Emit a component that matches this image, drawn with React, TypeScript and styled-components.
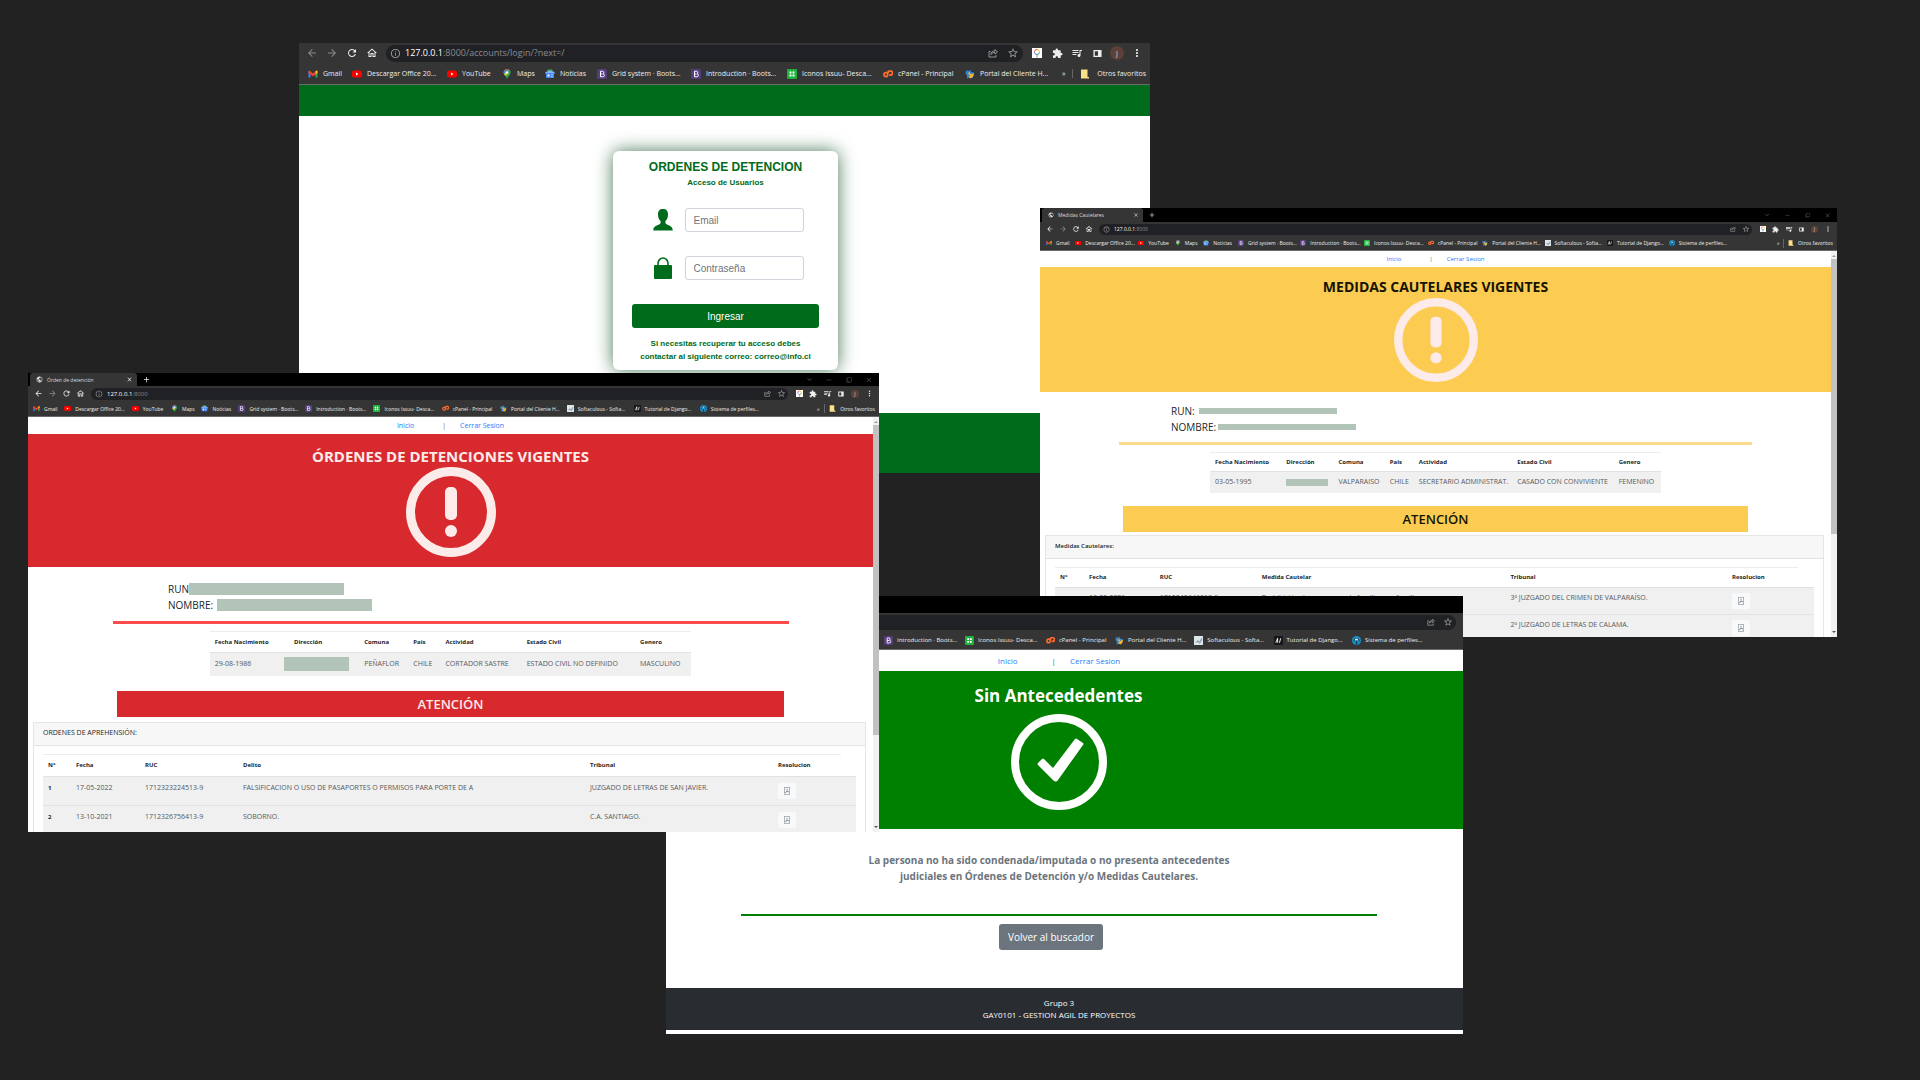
import React from "react";
import styled, { createGlobalStyle, css } from "styled-components";
import {
  MdArrowBack,
  MdArrowForward,
  MdRefresh,
  MdOutlineHome,
  MdInfoOutline,
  MdStarBorder,
  MdExtension,
  MdQueueMusic,
  MdMoreVert,
  MdClose,
  MdAdd,
  MdExpandMore,
  MdRemove,
  MdFilterNone,
  MdPublic,
} from "react-icons/md";
import { BsFilePdf } from "react-icons/bs";

const GlobalStyle = createGlobalStyle`
  *, *::before, *::after { box-sizing: border-box; }
  body { margin: 0; background: #222; font-family: "Open Sans", "Noto Sans", sans-serif; }
  button { font: inherit; border: 0; padding: 0; background: none; color: inherit; }
  a { text-decoration: none; }
  h1, h2, h3, p { margin: 0; }
`;

/* ---------- sizes of the browser frame at each zoom ---------- */

type Zoom = {
  cell: number;
  icon: number;
  url: number;
  label: number;
  tab: number;
  tabWidth: number;
  bar: number;
  marks: number;
  fav: number;
  favGap: number;
  others: number;
};

const zoomLarge: Zoom = { cell: 20, icon: 12, url: 9, label: 7, tab: 0, tabWidth: 0, bar: 20, marks: 21, fav: 10, favGap: 5, others: 84 };
const zoomMedium: Zoom = { cell: 17, icon: 10, url: 7, label: 6, tab: 17, tabWidth: 0, bar: 18, marks: 18, fav: 9, favGap: 4, others: 0 };
const zoomSmall: Zoom = { cell: 14, icon: 9, url: 6, label: 5, tab: 13, tabWidth: 107, bar: 15, marks: 15, fav: 7, favGap: 4, others: 58 };
const zoomTiny: Zoom = { cell: 13, icon: 8, url: 5, label: 5, tab: 14, tabWidth: 101, bar: 14, marks: 14, fav: 6, favGap: 4, others: 56 };

/* ---------- desktop and windows ---------- */

const Desktop = styled.main`
  position: relative;
  min-height: 100vh;
  overflow: hidden;
  background: #222;
`;

const Window = styled.section<{ $x: number; $y: number; $w: number; $h: number }>`
  position: absolute;
  left: ${(p) => p.$x}px;
  top: ${(p) => p.$y}px;
  width: ${(p) => p.$w}px;
  height: ${(p) => p.$h}px;
  display: flex;
  flex-direction: column;
  overflow: hidden;
  background: #fff;
`;

const TabStrip = styled.div<{ $z: Zoom }>`
  flex: none;
  display: flex;
  align-items: stretch;
  height: ${(p) => p.$z.tab}px;
  padding-left: 2px;
  background: #000;
  color: #bbb;
  font-size: ${(p) => p.$z.label}px;
`;

const Tab = styled.div<{ $w: number }>`
  display: flex;
  align-items: center;
  gap: 4px;
  width: ${(p) => p.$w}px;
  padding: 0 4px 0 6px;
  border-radius: 3px 3px 0 0;
  background: #353535;
  color: #ddd;
  line-height: 10px;
  white-space: nowrap;
  button { margin-left: auto; }
`;

const IconButton = styled.button<{ $dim?: boolean; $w?: number }>`
  flex: none;
  display: flex;
  align-items: center;
  justify-content: center;
  width: ${(p) => (p.$w ? `${p.$w}px` : "auto")};
  color: ${(p) => (p.$dim ? "#8a8a8a" : "#eee")};
`;

const WindowControls = styled.div`
  display: flex;
  margin-left: auto;
  ${IconButton} { color: #4a4a4a; }
`;

const Toolbar = styled.div<{ $z: Zoom }>`
  flex: none;
  display: flex;
  align-items: center;
  height: ${(p) => p.$z.bar}px;
  padding: 0 3px;
  background: #353535;
`;

const AddressBar = styled.div<{ $z: Zoom }>`
  flex: 1;
  display: flex;
  align-items: center;
  height: ${(p) => p.$z.bar - 3}px;
  margin: 0 4px;
  padding-left: 4px;
  border-radius: 10px;
  background: #202124;
  color: #8b8d90;
  font-size: ${(p) => p.$z.url}px;
  svg { color: #9a9a9a; }
`;

const Address = styled.span`
  flex: 1;
  padding-left: 4px;
  line-height: 12px;
  white-space: nowrap;
  b { color: #fff; font-weight: 400; }
`;

const Avatar = styled.span<{ $z: Zoom }>`
  display: flex;
  align-items: center;
  justify-content: center;
  width: ${(p) => p.$z.cell - 6}px;
  height: ${(p) => p.$z.cell - 6}px;
  border-radius: 50%;
  background: #5d4037;
  color: #ddd;
  font-size: ${(p) => p.$z.label}px;
`;

const BookmarkBar = styled.nav<{ $z: Zoom; $indent: number }>`
  flex: none;
  display: flex;
  align-items: center;
  height: ${(p) => p.$z.marks + 1}px;
  padding: 0 4px 0 ${(p) => p.$indent}px;
  border-bottom: 1px solid #6a6a6a;
  background: #353535;
  color: #eee;
  font-size: ${(p) => p.$z.label}px;
`;

const BookmarkGrid = styled.div<{ $cols: string }>`
  flex: 1;
  display: grid;
  grid-template-columns: ${(p) => p.$cols};
  align-items: center;
`;

const BookmarkLink = styled.a<{ $z: Zoom }>`
  display: flex;
  align-items: center;
  gap: ${(p) => p.$z.favGap}px;
  min-width: 0;
  color: #eee;
  white-space: nowrap;
  svg { flex: none; }
`;

const OtherBookmarks = styled.div<{ $z: Zoom }>`
  flex: none;
  display: flex;
  align-items: center;
  justify-content: space-between;
  width: ${(p) => p.$z.others}px;
  white-space: nowrap;
`;

const Divider = styled.span`
  width: 1px;
  height: 9px;
  background: #666;
`;

/* ---------- drawings ---------- */

function FavIcon({ kind, size }: { kind: string; size: number }) {
  return (
    <svg width={size} height={size} viewBox="0 0 20 20" aria-hidden="true">
      {kind === "cpanel" && (
        <g fill="none" stroke="#ff6c2c" strokeWidth="3.500">
          <path d="M9 7H6a4 4 0 0 0 0 8h2l3-11h4a4 4 0 0 1 0 8h-3" strokeLinejoin="round" />
        </g>
      )}
      {kind === "gmail" && (
        <>
          <path d="M1 4v13h4V9z" fill="#4285f4" />
          <path d="M19 4v13h-4V9z" fill="#34a853" />
          <path d="M1 4l2-1 7 6 7-6 2 1v4l-9 7-9-7z" fill="#ea4335" />
          <path d="M15 5l2-2 2 1v4l-4 3z" fill="#fbbc04" />
        </>
      )}
      {kind === "youtube" && (
        <>
          <rect x="0" y="3" width="20" height="14" rx="4" fill="#f00" />
          <path d="M8 7l5 3-5 3z" fill="#fff" />
        </>
      )}
      {kind === "maps" && (
        <>
          <path d="M10 0a7 7 0 0 0-7 7c0 5 5 7 7 13 2-6 7-8 7-13a7 7 0 0 0-7-7z" fill="#34a853" />
          <path d="M10 0a7 7 0 0 0-6 4l4 4 6-7z" fill="#ea4335" />
          <path d="M14 1L5 12 3 8l1-4z" fill="#4285f4" />
          <path d="M4 10l4-4 4 3-5 5z" fill="#fbbc04" />
          <circle cx="10" cy="7" r="2.500" fill="#fff" />
        </>
      )}
      {kind === "news" && (
        <>
          <path d="M5 1h10v6H5z" fill="#34a853" />
          <path d="M1 6l9-3 9 3v4H1z" fill="#8ab4f8" />
          <rect x="2" y="8" width="16" height="10" rx="1" fill="#4285f4" />
          <path d="M5 11h4v4H5zM12 11h4v1h-4zM12 14h4v1h-4z" fill="#fff" />
        </>
      )}
      {kind === "bootstrap" && (
        <>
          <rect width="20" height="20" rx="3" fill="#563d7c" />
          <path d="M7 4.500h4.200a2.600 2.600 0 0 1 .8 5 3 3 0 0 1-.6 6H7z" fill="none" stroke="#fff" strokeWidth="2" />
          <path d="M7 10h4" stroke="#fff" strokeWidth="2" />
        </>
      )}
      {kind === "icons" && (
        <>
          <rect width="20" height="20" rx="2" fill="#1db33c" />
          <path d="M5 5h4v4H5zM11 5h4v4h-4zM5 11h4v4H5zM11 11h4v4h-4z" fill="#fff" />
        </>
      )}
      {kind === "portal" && (
        <>
          <path d="M2 3l6 1 3-3 1 5 6 1-3 5 1 6-7-1-5 2V13L1 9z" fill="#2f86d6" />
          <path d="M8 6l4 5 6-3-1 6-5 5-5-3 3-3-4-4z" fill="#f7b52c" />
        </>
      )}
      {kind === "soft" && (
        <>
          <rect width="20" height="20" fill="#dfe6ea" />
          <path d="M3 15l5-6 4 3 6-9v6l-5 8-4-3z" fill="#8fa3b0" />
        </>
      )}
      {kind === "django" && (
        <>
          <rect width="20" height="20" rx="2" fill="#15171a" />
          <path d="M4 15L8 5v10M12 15l3-10" stroke="#fff" strokeWidth="2" fill="none" />
        </>
      )}
      {kind === "profiles" && (
        <>
          <circle cx="10" cy="10" r="10" fill="#1b8fc4" />
          <path d="M9 8h2l1 11H8z" fill="#103a55" />
          <circle cx="10" cy="7" r="3" fill="#e6f3fa" />
          <path d="M4 12c0-9 12-9 12 0" stroke="#103a55" strokeWidth="2" fill="none" />
        </>
      )}
      {kind === "folder" && <path d="M2 1h13v15h3v3H2z" fill="#fbe08a" />}
      {kind === "lens" && (
        <>
          <rect width="20" height="20" fill="#fff" />
          <path d="M5 9a5 5 0 0 1 5-6" stroke="#ea4335" strokeWidth="2" fill="none" />
          <path d="M10 3a5 5 0 0 1 5 6" stroke="#fbbc04" strokeWidth="2" fill="none" />
          <path d="M15 9a5 5 0 0 1-5 4" stroke="#34a853" strokeWidth="2" fill="none" />
          <path d="M10 13a5 5 0 0 1-5-4" stroke="#4285f4" strokeWidth="2" fill="none" />
          <path d="M10 13v6" stroke="#888" strokeWidth="2" />
        </>
      )}
      {kind === "panel" && <path d="M1 2h18v16H1zM4 5v10h7V5z" fill="#eee" fillRule="evenodd" />}
      {kind === "share" && (
        <path d="M5 7H2v11h14v-4M6 13c0-5 3-7 8-7V3l5 5-5 4V9c-4 0-6 1-8 4z" fill="none" stroke="#b0b0b0" strokeWidth="1.600" />
      )}
    </svg>
  );
}

const WarningSign = ({ size }: { size: number }) => (
  <svg width={size} height={size} viewBox="0 0 90 90" aria-hidden="true">
    <circle cx="45" cy="45" r="40.500" fill="none" stroke="#fcebe9" strokeWidth="9" />
    <rect x="39" y="20" width="12" height="33" rx="5" fill="#fcebe9" />
    <circle cx="45" cy="64" r="6" fill="#fcebe9" />
  </svg>
);

const CheckSign = () => (
  <svg width="96" height="96" viewBox="0 0 96 96" aria-hidden="true">
    <circle cx="48" cy="48" r="44" fill="none" stroke="#fff" strokeWidth="8" />
    <path
      d="M27 49l4-4q1-1 2 0l9 9 22-29q1-1 2 0l6 4q1 1 0 2L47 66q-2 3-5 0L27 51q-1-1 0-2z"
      fill="#fff"
    />
  </svg>
);

const PersonGlyph = () => (
  <svg width="20" height="22" viewBox="0 0 20 22" role="img" aria-label="Email">
    <path
      d="M10 0C6.500 0 5 2 5 5.500c0 2.500.8 5 2.500 6.500.4 1.500 0 2.800-1 3.300C3.500 16.800.5 17.500.3 21v.5h19.400V21c-.2-3.500-3.200-4.200-6.200-5.700-1-.5-1.400-1.800-1-3.300C14.200 10.500 15 8 15 5.500 15 2 13.500 0 10 0z"
      fill="#006b1b"
    />
  </svg>
);

const LockGlyph = () => (
  <svg width="20" height="22" viewBox="0 0 20 22" role="img" aria-label="Contraseña">
    <path d="M5 9V6.500a5 5.500 0 0 1 10 0V9" fill="none" stroke="#006b1b" strokeWidth="1.600" />
    <rect x="1" y="8" width="18" height="14" rx="1" fill="#006b1b" />
  </svg>
);

/* ---------- browser frame ---------- */

const bookmarks = [
  { kind: "gmail", text: "Gmail", w: 44 },
  { kind: "youtube", text: "Descargar Office 20...", w: 95 },
  { kind: "youtube", text: "YouTube", w: 55 },
  { kind: "maps", text: "Maps", w: 43 },
  { kind: "news", text: "Noticias", w: 52 },
  { kind: "bootstrap", text: "Grid system · Boots...", w: 94 },
  { kind: "bootstrap", text: "Introduction · Boots...", w: 96 },
  { kind: "icons", text: "Iconos Issuu- Desca...", w: 96 },
  { kind: "cpanel", text: "cPanel - Principal", w: 82 },
  { kind: "portal", text: "Portal del Cliente H...", w: 94 },
  { kind: "soft", text: "Softaculous - Softa...", w: 94 },
  { kind: "django", text: "Tutorial de Django...", w: 93 },
  { kind: "profiles", text: "Sistema de perfiles...", w: 93 },
];

type FrameProps = {
  z: Zoom;
  title?: string;
  path?: string;
  from?: number;
  to: number;
  lastWidth: number;
  indent: number;
  cropped?: boolean;
};

function BrowserFrame({ z, title, path, from = 0, to, lastWidth, indent, cropped }: FrameProps) {
  const shown = bookmarks.slice(from, to);
  const cols = shown
    .map((b, i) => `minmax(0, ${i === shown.length - 1 ? lastWidth : b.w}fr)`)
    .join(" ");
  return (
    <>
      {z.tab > 0 && (
        <TabStrip $z={z}>
          {title && (
            <>
              <Tab $w={z.tabWidth}>
                <MdPublic size={z.icon - 2} />
                {title}
                <IconButton aria-label="Cerrar pestaña"><MdClose size={z.icon - 2} /></IconButton>
              </Tab>
              <IconButton aria-label="Nueva pestaña" $w={18}><MdAdd size={z.icon} /></IconButton>
              <WindowControls>
                <IconButton aria-label="Buscar pestañas" $w={20}><MdExpandMore size={z.icon} /></IconButton>
                <IconButton aria-label="Minimizar" $w={20}><MdRemove size={z.icon - 1} /></IconButton>
                <IconButton aria-label="Restaurar" $w={20}><MdFilterNone size={z.icon - 3} /></IconButton>
                <IconButton aria-label="Cerrar" $w={20}><MdClose size={z.icon - 1} /></IconButton>
              </WindowControls>
            </>
          )}
        </TabStrip>
      )}
      <Toolbar $z={z}>
        {!cropped && (
          <>
            <IconButton aria-label="Atrás" $w={z.cell} $dim={!title}><MdArrowBack size={z.icon} /></IconButton>
            <IconButton aria-label="Adelante" $w={z.cell} $dim><MdArrowForward size={z.icon} /></IconButton>
            <IconButton aria-label="Recargar" $w={z.cell}><MdRefresh size={z.icon} /></IconButton>
            <IconButton aria-label="Inicio" $w={z.cell}><MdOutlineHome size={z.icon} /></IconButton>
          </>
        )}
        <AddressBar $z={z}>
          {!cropped && <MdInfoOutline size={z.icon - 1} />}
          <Address>
            {!cropped && (
              <>
                <b>127.0.0.1</b>
                {path}
              </>
            )}
          </Address>
          <IconButton aria-label="Compartir" $w={z.cell}><FavIcon kind="share" size={z.icon - 2} /></IconButton>
          <IconButton aria-label="Favorito" $w={z.cell}><MdStarBorder size={z.icon} /></IconButton>
        </AddressBar>
        {!cropped && (
          <>
            <IconButton aria-label="Lens" $w={z.cell}><FavIcon kind="lens" size={z.icon - 2} /></IconButton>
            <IconButton aria-label="Extensiones" $w={z.cell}><MdExtension size={z.icon - 1} /></IconButton>
            <IconButton aria-label="Multimedia" $w={z.cell}><MdQueueMusic size={z.icon} /></IconButton>
            <IconButton aria-label="Panel lateral" $w={z.cell}><FavIcon kind="panel" size={z.icon - 3} /></IconButton>
            <IconButton aria-label="Perfil" $w={z.cell}><Avatar $z={z}>J</Avatar></IconButton>
            <IconButton aria-label="Menú" $w={z.cell}><MdMoreVert size={z.icon} /></IconButton>
          </>
        )}
      </Toolbar>
      <BookmarkBar $z={z} $indent={indent}>
        <BookmarkGrid $cols={cols}>
          {shown.map((b) => (
            <BookmarkLink key={b.text} href="#" $z={z}>
              <FavIcon kind={b.kind} size={z.fav} />
              {b.text}
            </BookmarkLink>
          ))}
        </BookmarkGrid>
        {!cropped && (
          <OtherBookmarks $z={z}>
            <span>»</span>
            <Divider />
            <FavIcon kind="folder" size={z.fav} />
            <span>Otros favoritos</span>
          </OtherBookmarks>
        )}
      </BookmarkBar>
    </>
  );
}

/* ---------- login page ---------- */

const GreenBand = styled.div<{ $h: number }>`
  flex: none;
  height: ${(p) => p.$h}px;
  background: #006b1b;
`;

const LoginArea = styled.div`
  flex: 1;
  display: flex;
  justify-content: center;
  align-items: flex-start;
  padding: 35px 0 0 2px;
`;

const LoginCard = styled.form`
  display: flex;
  flex-direction: column;
  align-items: center;
  width: 225px;
  height: 219px;
  padding: 8px 19px 0;
  border-radius: 6px;
  background: #fff;
  box-shadow: 0 0 18px #4a7a58;
  color: #006b1b;
  font-family: "Liberation Sans", Arial, sans-serif;
  font-weight: 700;
`;

const LoginTitle = styled.h1`
  font-size: 12px;
  line-height: 16px;
`;

const LoginSubtitle = styled.p`
  margin-bottom: 17px;
  font-size: 8px;
  line-height: 16px;
`;

const Field = styled.div`
  display: flex;
  align-items: center;
  gap: 12px;
  margin-bottom: 24px;
  padding-left: 5px;
  label { display: flex; }
`;

const TextInput = styled.input`
  width: 119px;
  height: 24px;
  padding: 0 8px;
  border: 1px solid #ced4da;
  border-radius: 3px;
  font-family: inherit;
  font-size: 10px;
  &::placeholder { color: #6c757d; opacity: 1; }
`;

const SubmitButton = styled.button`
  align-self: stretch;
  height: 24px;
  margin-bottom: 9px;
  border-radius: 3px;
  background: #006b1b;
  color: #fff;
  font-size: 10px;
  font-weight: 400;
`;

const LoginHelp = styled.p`
  font-size: 8px;
  line-height: 13px;
  text-align: center;
  white-space: nowrap;
`;

function LoginWindow() {
  return (
    <Window $x={299} $y={43} $w={851} $h={430}>
      <BrowserFrame z={zoomLarge} path=":8000/accounts/login/?next=/" to={10} lastWidth={97} indent={9} />
      <GreenBand $h={31} />
      <LoginArea>
        <LoginCard onSubmit={(e) => e.preventDefault()}>
          <LoginTitle>ORDENES DE DETENCION</LoginTitle>
          <LoginSubtitle>Acceso de Usuarios</LoginSubtitle>
          <Field>
            <label htmlFor="email"><PersonGlyph /></label>
            <TextInput id="email" type="email" placeholder="Email" />
          </Field>
          <Field>
            <label htmlFor="password"><LockGlyph /></label>
            <TextInput id="password" type="password" placeholder="Contraseña" />
          </Field>
          <SubmitButton type="submit">Ingresar</SubmitButton>
          <LoginHelp>
            Si necesitas recuperar tu acceso debes
            <br />
            contactar al siguiente correo: correo@info.cl
          </LoginHelp>
        </LoginCard>
      </LoginArea>
      <GreenBand $h={60} />
    </Window>
  );
}

/* ---------- result pages ---------- */

type Tone = "red" | "yellow" | "green";
const toneFill: Record<Tone, string> = { red: "#d82a2e", yellow: "#fccb52", green: "#008000" };
const toneText: Record<Tone, string> = { red: "#fcebe9", yellow: "#141400", green: "#fff" };
const toneRule: Record<Tone, string> = { red: "#ff4b4b", yellow: "#fddb8a", green: "#008000" };

const PageRow = styled.div`
  flex: 1;
  min-height: 0;
  display: flex;
`;

const Page = styled.div`
  flex: 1;
  min-width: 0;
  overflow: hidden;
`;

const ScrollTrack = styled.div`
  flex: none;
  display: flex;
  flex-direction: column;
  justify-content: space-between;
  align-items: center;
  width: 6px;
  background: #f1f1f1;
`;

const ScrollArrow = styled.i<{ $down?: boolean }>`
  width: 0;
  height: 0;
  margin: 2px 0;
  border: 2px solid transparent;
  ${(p) => (p.$down ? "border-top-color: #555;" : "border-bottom-color: #999;")}
`;

const ScrollThumb = styled.div<{ $h: number }>`
  width: 100%;
  height: ${(p) => p.$h}px;
  margin-bottom: auto;
  background: #c1c1c1;
`;

const SiteNav = styled.nav<{ $h: number; $size: number; $gap: number; $shift?: number; $bar?: string }>`
  display: flex;
  align-items: center;
  justify-content: center;
  height: ${(p) => p.$h}px;
  padding-right: ${(p) => p.$shift ?? 0}px;
  font-size: ${(p) => p.$size}px;
  a { color: #1a80ff; }
  span { margin: 0 14px 0 ${(p) => p.$gap}px; color: ${(p) => p.$bar ?? "#666"}; }
`;

const Hero = styled.header<{ $tone: Tone; $h: number; $pad: number; $shift?: number }>`
  display: flex;
  flex-direction: column;
  align-items: center;
  height: ${(p) => p.$h}px;
  padding: ${(p) => p.$pad}px ${(p) => p.$shift ?? 0}px 0 0;
  background: ${(p) => toneFill[p.$tone]};
  color: ${(p) => toneText[p.$tone]};
  svg { flex: none; }
`;

const HeroTitle = styled.h1<{ $size: number; $gap: number }>`
  margin-bottom: ${(p) => p.$gap}px;
  font-size: ${(p) => p.$size}px;
  font-weight: 700;
  line-height: 20px;
`;

const Identity = styled.div<{ $indent: number; $top: number }>`
  padding: ${(p) => p.$top}px 0 0 ${(p) => p.$indent}px;
`;

const IdentityLine = styled.div<{ $gap: number }>`
  display: flex;
  align-items: center;
  gap: ${(p) => p.$gap}px;
  height: 16px;
  color: #212529;
  font-size: 10px;
  font-weight: 500;
`;

const Redacted = styled.span<{ $w: number; $h: number; $pull?: number }>`
  display: block;
  width: ${(p) => p.$w}px;
  height: ${(p) => p.$h}px;
  margin-left: ${(p) => -(p.$pull ?? 0)}px;
  background: #b2c4b8;
`;

const Rule = styled.hr<{ $tone: Tone; $top: number; $thick: number; $w: number }>`
  width: ${(p) => p.$w}%;
  height: ${(p) => p.$thick}px;
  margin: ${(p) => p.$top}px auto ${(p) => 10 - p.$thick}px;
  border: 0;
  background: ${(p) => toneRule[p.$tone]};
`;

const tableBase = css`
  table-layout: fixed;
  border-collapse: collapse;
  color: #55595c;
  font-size: 7px;
  line-height: 10px;
  th, td { padding: 0 0 0 5px; text-align: left; white-space: nowrap; }
  thead th { border-top: 1px solid #ececec; color: #212529; font-size: 6px; font-weight: 700; }
  tbody tr { border-top: 1px solid #e2e2e2; background: #f0f0f0; }
`;

const PersonTable = styled.table<{ $head: number; $row: number; $gap: number }>`
  ${tableBase}
  width: 57%;
  margin: 0 auto ${(p) => p.$gap}px;
  thead tr { height: ${(p) => p.$head}px; }
  tbody tr { height: ${(p) => p.$row}px; }
`;

const RecordTable = styled.table<{ $head: number; $row: number; $pad: number }>`
  ${tableBase}
  width: 100%;
  thead tr { height: ${(p) => p.$head}px; }
  tbody tr { height: ${(p) => p.$row}px; }
  tbody th, tbody td { padding-top: ${(p) => p.$pad}px; vertical-align: top; }
  tbody th { color: #212529; font-size: 6px; font-weight: 700; }
`;

const Attention = styled.h2<{ $tone: Tone; $gap: number }>`
  width: 79%;
  margin: 0 auto ${(p) => p.$gap}px;
  background: ${(p) => toneFill[p.$tone]};
  color: ${(p) => toneText[p.$tone]};
  font-size: 13px;
  font-weight: 600;
  line-height: 26px;
  text-align: center;
`;

const Card = styled.section`
  margin: 0 7px 0 5px;
  border: 1px solid #e6e6e6;
`;

const CardTitle = styled.h3<{ $small: boolean }>`
  height: 23px;
  padding: 4px 9px 0;
  border-bottom: 1px solid #e2e2e2;
  background: #f7f7f7;
  color: #212529;
  font-size: ${(p) => (p.$small ? 6 : 7)}px;
  font-weight: ${(p) => (p.$small ? 600 : 400)};
  line-height: 12px;
`;

const CardBody = styled.div`
  padding: 8px 9px 0;
`;

const PdfButton = styled.button`
  display: flex;
  align-items: center;
  justify-content: center;
  width: 18px;
  height: 16px;
  border-radius: 2px;
  background: #f8f9fa;
  color: #6c757d;
`;

type RecordPageProps = {
  tone: Tone;
  small: boolean;
  title: string;
  runGap: number;
  nameGap: number;
  barWidth: number;
  barHeight: number;
  personCols: number[];
  person: (string | null)[];
  cellBar: [number, number, number];
  cardTitle: string;
  recordCols: number[];
  recordHead: string[];
  records: string[][];
};

function Columns({ widths }: { widths: number[] }) {
  const total = widths.reduce((a, b) => a + b, 0);
  return (
    <colgroup>
      {widths.map((w, i) => (
        <col key={i} style={{ width: `${(w / total) * 100}%` }} />
      ))}
    </colgroup>
  );
}

const personHead = ["Fecha Nacimiento", "Dirección", "Comuna", "Pais", "Actividad", "Estado Civil", "Genero"];

function RecordPage(p: RecordPageProps) {
  return (
    <PageRow>
      <Page>
        <SiteNav $h={p.small ? 16 : 17} $size={p.small ? 6 : 7} $gap={28}>
          <a href="#">Inicio</a>
          <span>|</span>
          <a href="#">Cerrar Sesion</a>
        </SiteNav>
        <Hero $tone={p.tone} $h={p.small ? 125 : 133} $pad={p.small ? 10 : 12}>
          <HeroTitle $size={p.small ? 14 : 15} $gap={1}>{p.title}</HeroTitle>
          <WarningSign size={p.small ? 84 : 90} />
        </Hero>
        <Identity $indent={p.small ? 131 : 140} $top={p.small ? 11 : 14}>
          <IdentityLine $gap={p.runGap}>
            {p.small ? "RUN:" : "RUN"}
            <Redacted $w={p.barWidth} $h={p.barHeight} />
          </IdentityLine>
          <IdentityLine $gap={p.nameGap}>
            NOMBRE:
            <Redacted $w={p.barWidth} $h={p.barHeight} />
          </IdentityLine>
        </Identity>
        <Rule $tone={p.tone} $top={p.small ? 7 : 8} $thick={3} $w={80} />
        <PersonTable $head={p.small ? 19 : 21} $row={p.small ? 21 : 23} $gap={p.small ? 13 : 15}>
          <Columns widths={p.personCols} />
          <thead>
            <tr>
              {personHead.map((h) => (
                <th key={h} scope="col">{h}</th>
              ))}
            </tr>
          </thead>
          <tbody>
            <tr>
              {p.person.map((v, i) => (
                <td key={i}>
                  {v ?? <Redacted $w={p.cellBar[0]} $h={p.cellBar[1]} $pull={p.cellBar[2]} />}
                </td>
              ))}
            </tr>
          </tbody>
        </PersonTable>
        <Attention $tone={p.tone} $gap={p.small ? 3 : 5}>ATENCIÓN</Attention>
        <Card>
          <CardTitle $small={p.small}>{p.cardTitle}</CardTitle>
          <CardBody>
            <RecordTable $head={p.small ? 20 : 22} $row={p.small ? 27 : 29} $pad={p.small ? 5 : 6}>
              <Columns widths={p.recordCols} />
              <thead>
                <tr>
                  {p.recordHead.map((h) => (
                    <th key={h} scope="col">{h}</th>
                  ))}
                </tr>
              </thead>
              <tbody>
                {p.records.map((r) => (
                  <tr key={r[0]}>
                    <th scope="row">{r[0]}</th>
                    {r.slice(1).map((c, i) => (
                      <td key={i}>{c}</td>
                    ))}
                    <td>
                      <PdfButton aria-label="Ver resolución"><BsFilePdf size={8} /></PdfButton>
                    </td>
                    <td />
                  </tr>
                ))}
              </tbody>
            </RecordTable>
          </CardBody>
        </Card>
      </Page>
      <ScrollTrack>
        <ScrollArrow />
        <ScrollThumb $h={p.small ? 275 : 310} />
        <ScrollArrow $down />
      </ScrollTrack>
    </PageRow>
  );
}

/* ---------- clean record page ---------- */

const Notice = styled.p`
  padding: 23px 31px 0 0;
  color: #6c757d;
  font-size: 10px;
  font-weight: 700;
  line-height: 16px;
  text-align: center;
`;

const ShiftedRule = styled.div`
  padding-right: 11px;
`;

const BackRow = styled.div`
  display: flex;
  justify-content: center;
  margin-bottom: 38px;
  padding-right: 27px;
`;

const BackButton = styled.button`
  width: 104px;
  height: 26px;
  border-radius: 3px;
  background: #6c757d;
  color: #fff;
  font-size: 10px;
`;

const Footer = styled.footer`
  height: 42px;
  padding: 9px 11px 0 0;
  background: #292d32;
  color: #fff;
  font-size: 8px;
  line-height: 12px;
  text-align: center;
`;

function ClearWindow() {
  return (
    <Window $x={666} $y={596} $w={797} $h={438}>
      <BrowserFrame z={zoomMedium} from={6} to={13} lastWidth={127} indent={218} cropped />
      <SiteNav $h={21} $size={8} $gap={34} $shift={11} $bar="#2e7d32">
        <a href="#">Inicio</a>
        <span>|</span>
        <a href="#">Cerrar Sesion</a>
      </SiteNav>
      <Hero $tone="green" $h={158} $pad={15} $shift={12}>
        <HeroTitle $size={17} $gap={8}>Sin Antecededentes</HeroTitle>
        <CheckSign />
      </Hero>
      <Notice>
        La persona no ha sido condenada/imputada o no presenta antecedentes
        <br />
        judiciales en Órdenes de Detención y/o Medidas Cautelares.
      </Notice>
      <ShiftedRule>
        <Rule $tone="green" $top={30} $thick={2} $w={81} />
      </ShiftedRule>
      <BackRow>
        <BackButton>Volver al buscador</BackButton>
      </BackRow>
      <Footer>
        Grupo 3
        <br />
        GAY0101 - GESTION AGIL DE PROYECTOS
      </Footer>
    </Window>
  );
}

export default function App() {
  return (
    <Desktop>
      <GlobalStyle />
      <LoginWindow />
      <Window $x={1040} $y={208} $w={797} $h={429}>
        <BrowserFrame z={zoomTiny} title="Medidas Cautelares" path=":8000" to={13} lastWidth={163} indent={6} />
        <RecordPage
          tone="yellow"
          small
          title="MEDIDAS CAUTELARES VIGENTES"
          runGap={4}
          nameGap={2}
          barWidth={138}
          barHeight={6}
          personCols={[71, 52, 51, 29, 98, 101, 47]}
          person={["03-05-1995", null, "VALPARAISO", "CHILE", "SECRETARIO ADMINISTRAT.", "CASADO CON CONVIVIENTE", "FEMENINO"]}
          cellBar={[42, 7, 0]}
          cardTitle="Medidas Cautelares:"
          recordCols={[29, 71, 102, 249, 222, 71, 16]}
          recordHead={["N°", "Fecha", "RUC", "Medida Cautelar", "Tribunal", "Resolucion"]}
          records={[
            ["1", "18-05-2021", "1712345646313-9", "Prohibición de acercarse a la familia u su familia.", "3º JUZGADO DEL CRIMEN DE VALPARAÍSO."],
            ["2", "", "", "", "2º JUZGADO DE LETRAS DE CALAMA."],
          ]}
        />
      </Window>
      <ClearWindow />
      <Window $x={28} $y={373} $w={851} $h={459}>
        <BrowserFrame z={zoomSmall} title="Órden de detención" path=":8000" to={13} lastWidth={165} indent={5} />
        <RecordPage
          tone="red"
          small={false}
          title="ÓRDENES DE DETENCIONES VIGENTES"
          runGap={0}
          nameGap={4}
          barWidth={155}
          barHeight={12}
          personCols={[79, 70, 49, 32, 81, 113, 56]}
          person={["29-08-1986", null, "PEÑAFLOR", "CHILE", "CORTADOR SASTRE", "ESTADO CIVIL NO DEFINIDO", "MASCULINO"]}
          cellBar={[65, 14, 10]}
          cardTitle="ORDENES DE APREHENSIÓN:"
          recordCols={[28, 69, 98, 347, 188, 68, 15]}
          recordHead={["N°", "Fecha", "RUC", "Delito", "Tribunal", "Resolucion"]}
          records={[
            ["1", "17-05-2022", "1712323224513-9", "FALSIFICACION O USO DE PASAPORTES O PERMISOS PARA PORTE DE A", "JUZGADO DE LETRAS DE SAN JAVIER."],
            ["2", "13-10-2021", "1712326756413-9", "SOBORNO.", "C.A. SANTIAGO."],
          ]}
        />
      </Window>
    </Desktop>
  );
}
